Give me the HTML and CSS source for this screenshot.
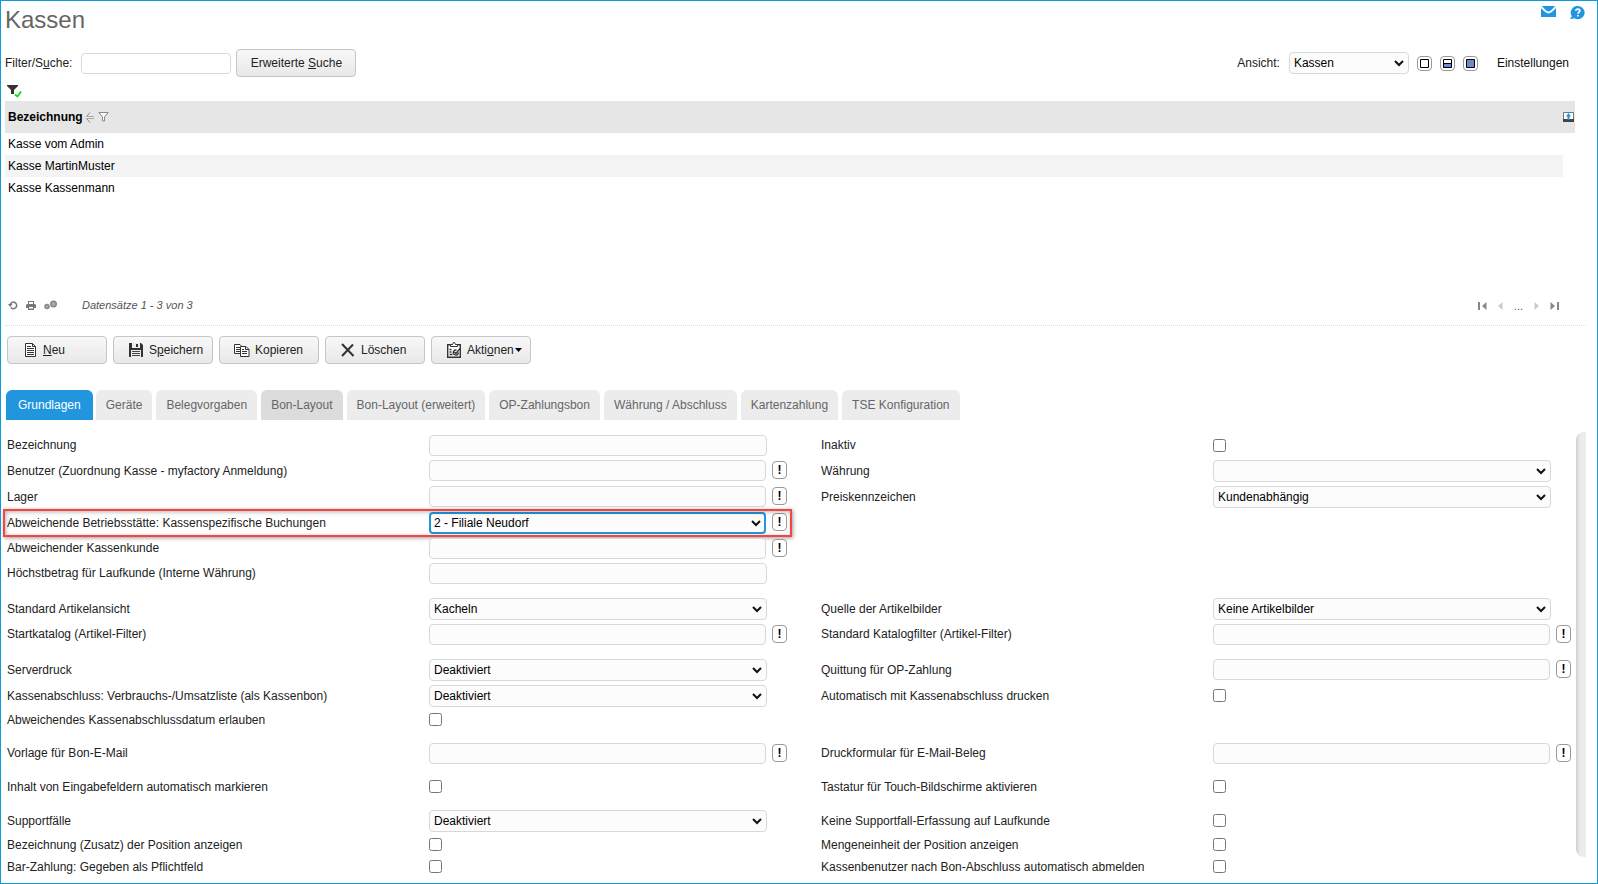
FILE: index.html
```html
<!DOCTYPE html>
<html lang="de">
<head>
<meta charset="utf-8">
<title>Kassen</title>
<link rel="stylesheet" href="styles.css">
</head>
<body>
<header class="page-head">
  <h1 class="page-title">Kassen</h1>
  <nav class="head-links">
    <a href="#mail" aria-label="Nachricht"><svg width="15" height="11" viewBox="0 0 15 11"><path fill="#2196de" d="M0 0h15v11H0z"/><path fill="none" stroke="#fff" stroke-width="2" d="M0 0.5Q5 6.5 7.500 6.500T15 .5"/></svg></a>
    <a href="#hilfe" aria-label="Hilfe"><svg width="15" height="14" viewBox="0 0 15 14"><path fill="#2196de" d="M8 0a6.600 6.600 0 1 1-3.500 12.200L0 13.300l1.800-3.100A6.600 6.600 0 0 1 8 0z"/><path fill="none" stroke="#fff" stroke-width="1.700" d="M5.800 4.800C5.900 2.600 9.900 2.600 9.900 4.700 9.900 6 8 6 8 7.800M8 8.900v1.700"/></svg></a>
  </nav>
</header>

<section class="toolbar">
  <label for="suche">Filter/S<u>u</u>che:</label>
  <input class="text search" id="suche" type="text">
  <button class="btn search-btn" type="button">Erweiterte <u>S</u>uche</button>
  <div class="view">
    <label for="ansicht">Ansicht:</label>
    <select class="select view-select" id="ansicht"><option>Kassen</option></select>
    <div class="view-modes">
      <button class="mini" type="button" aria-label="Nur Liste"><svg width="9" height="9" viewBox="0 0 9 9"><path fill="#fff" stroke="#000" d="M.5.5h8v8h-8z"/></svg></button>
      <button class="mini" type="button" aria-label="Geteilt"><svg width="9" height="9" viewBox="0 0 9 9"><path fill="#fff" d="M0 0h9v9H0z"/><path fill="#6f8cc8" d="M0 4h9v5H0z"/><path fill="none" stroke="#000" d="M.5.5h8v8h-8zM0 4.500h9"/></svg></button>
      <button class="mini" type="button" aria-label="Nur Details"><svg width="9" height="9" viewBox="0 0 9 9"><path fill="#6f8cc8" stroke="#000" d="M.5.5h8v8h-8z"/></svg></button>
    </div>
    <a class="settings" href="#einstellungen">Einstellungen</a>
  </div>
</section>

<div class="filter-state">
  <svg width="15" height="13" viewBox="0 0 15 13"><path fill="#333" d="M0 0h11v1L7 5v4H4V5L0 1z"/><path fill="none" stroke="#0be012" stroke-width="1.800" d="M8 9.500l2.500 2L14 6.500"/></svg>
</div>

<section class="list">
  <table class="grid">
    <thead>
      <tr>
        <th scope="col"><div class="col-head">Bezeichnung
          <svg width="9" height="11" viewBox="0 0 9 11"><path fill="none" stroke="#888" d="M.5 4.500 4 .5M.5 6.500 4 10.500"/><path stroke="#aaa" d="M1 4.500h7M1 6.500h7"/></svg>
          <svg width="11" height="10" viewBox="0 0 11 10"><path fill="#f8f8f8" stroke="#888" d="M.8.5h9.400L6.500 5v4h-2V5z"/></svg></div></th>
        <th class="tool-col"><svg width="11" height="10" viewBox="0 0 11 10"><path fill="#fff" stroke="#777" d="M.5.5h10v9H.5z"/><path fill="#444" d="M0 7h11v3H0z"/><path fill="#2196de" d="M5.500 1 8 4.500H6.500V8h-2V4.500H3z"/></svg></th>
      </tr>
    </thead>
    <tbody>
      <tr><td>Kasse vom Admin</td></tr>
      <tr class="alt"><td>Kasse MartinMuster</td></tr>
      <tr><td>Kasse Kassenmann</td></tr>
    </tbody>
  </table>
</section>

<footer class="list-foot">
  <div class="foot-tools">
    <button class="icon" type="button" aria-label="Aktualisieren"><svg width="10" height="10" viewBox="0 0 10 10"><path fill="none" stroke="#777" stroke-width="1.500" d="M2.200 4.500a3.300 3.300 0 1 1 .6 3"/><path fill="#777" d="M0 4h4.500L2.200 7z"/></svg></button>
    <button class="icon" type="button" aria-label="Drucken"><svg width="10" height="9" viewBox="0 0 10 9"><path fill="#777" d="M2 0h6v3h1l1 1v3H8v2H2V7H0V4l1-1h1z"/><path fill="#fff" d="M3 1h4v2H3zM3 6h4v1.500H3z"/></svg></button>
    <button class="icon" type="button" aria-label="Optionen"><svg width="13" height="10" viewBox="0 0 13 10"><circle cx="3" cy="6.500" r="2" fill="#aaa" stroke="#888" stroke-width="1.500"/><circle cx="9.500" cy="4" r="2.700" fill="#aaa" stroke="#888" stroke-width="1.600"/></svg></button>
  </div>
  <span class="count">Datensätze 1 - 3 von 3</span>
  <nav class="pager">
    <button class="icon" type="button" aria-label="Erste"><svg width="9" height="8" viewBox="0 0 9 8"><path fill="#888" d="M0 0h2v8H0zM8.500 0v8L4 4z"/></svg></button>
    <button class="icon" type="button" aria-label="Zurück"><svg width="5" height="8" viewBox="0 0 5 8"><path fill="#ccc" d="M4.500 0v8L0 4z"/></svg></button>
    <span>...</span>
    <button class="icon" type="button" aria-label="Weiter"><svg width="5" height="8" viewBox="0 0 5 8"><path fill="#ccc" d="M.5 0v8L5 4z"/></svg></button>
    <button class="icon" type="button" aria-label="Letzte"><svg width="9" height="8" viewBox="0 0 9 8"><path fill="#888" d="M7 0h2v8H7zM.5 0v8L5 4z"/></svg></button>
  </nav>
</footer>

<div class="actions">
  <button class="btn action" type="button"><svg width="16" height="16" viewBox="0 0 16 16"><path fill="#fff" stroke="#333" d="M3.500 1.500h7l3 3v10h-10z"/><path fill="none" stroke="#333" d="M10.500 1.500v3h3M5 4.500h4M5 6.500h7M5 8.500h7M5 10.500h7M5 12.500h7"/></svg><span><u>N</u>eu</span></button>
  <button class="btn action" type="button"><svg width="16" height="16" viewBox="0 0 16 16"><path fill="#333" d="M1 1h12l2 2v12H1z"/><path fill="#eee" d="M4 1h8v5H4zM3 8h10v7H3z"/><path fill="#333" d="M8 2h2v3H8z"/><path stroke="#444" d="M4 9.500h8M4 11.500h8M4 13.500h8"/></svg><span>S<u>p</u>eichern</span></button>
  <button class="btn action" type="button"><svg width="16" height="16" viewBox="0 0 16 16"><path fill="#fff" stroke="#333" d="M.5 2.500H6l2 2v7H.5z"/><path stroke="#333" d="M2 5.500h4M2 7.500h4M2 9.500h4"/><path fill="#fff" stroke="#333" d="M6.500 4.500H12l3 3v7H6.500z"/><path fill="none" stroke="#333" d="M11.500 4.500v3H15M8 7.500h2M8 9.500h5M8 11.500h5"/></svg><span>Kopieren</span></button>
  <button class="btn action" type="button"><svg width="16" height="16" viewBox="0 0 16 16"><path fill="none" stroke="#333" stroke-width="2" d="M2 2l11.500 12M13 2.500 2 14"/></svg><span>Löschen</span></button>
  <button class="btn action" type="button"><svg width="16" height="16" viewBox="0 0 16 16"><path fill="#fff" stroke="#333" stroke-width="1.400" d="M1.700 2.700h12.600v12.600H1.700z"/><path fill="#fff" stroke="#333" d="M4.500 4.500v-2h2l1-2h1l1 2h2v2z"/><path fill="none" stroke="#333" stroke-width="1.400" d="M3.500 7.500h2M3.500 10h2M3.500 12.500h3"/><path fill="none" stroke="#333" stroke-width="1.400" d="M12.500 10.500a2.600 2.600 0 1 1-2-2.500M8.500 10l1.500 1.500 4-5"/></svg><span>Akti<u>o</u>nen</span><svg class="caret" width="7" height="4" viewBox="0 0 7 4"><path d="M0 0h7L3.500 4z"/></svg></button>
</div>

<nav class="tabs">
  <a class="tab active" href="#grundlagen">Grundlagen</a>
  <a class="tab" href="#geraete">Geräte</a>
  <a class="tab" href="#belegvorgaben">Belegvorgaben</a>
  <a class="tab hover" href="#bon">Bon-Layout</a>
  <a class="tab" href="#bon2">Bon-Layout (erweitert)</a>
  <a class="tab" href="#op">OP-Zahlungsbon</a>
  <a class="tab" href="#waehrung">Währung / Abschluss</a>
  <a class="tab" href="#karten">Kartenzahlung</a>
  <a class="tab" href="#tse">TSE Konfiguration</a>
</nav>

<main class="detail">
  <form class="form">
    <div class="row">
      <label for="f1">Bezeichnung</label><div class="field"><input class="text" id="f1" type="text"></div>
      <label for="g1">Inaktiv</label><div class="field"><input class="check" id="g1" type="checkbox"></div>
    </div>
    <div class="row">
      <label for="f2">Benutzer (Zuordnung Kasse - myfactory Anmeldung)</label><div class="field lookup"><input class="text" id="f2" type="text"><button class="pick" type="button">!</button></div>
      <label for="g2">Währung</label><div class="field"><select class="select" id="g2"><option></option></select></div>
    </div>
    <div class="row">
      <label for="f3">Lager</label><div class="field lookup"><input class="text" id="f3" type="text"><button class="pick" type="button">!</button></div>
      <label for="g3">Preiskennzeichen</label><div class="field"><select class="select" id="g3"><option>Kundenabhängig</option></select></div>
    </div>
    <div class="row marked">
      <label for="f4">Abweichende Betriebsstätte: Kassenspezifische Buchungen</label><div class="field lookup"><select class="select focused" id="f4"><option>2 - Filiale Neudorf</option></select><button class="pick" type="button">!</button></div>
    </div>
    <div class="row">
      <label for="f5">Abweichender Kassenkunde</label><div class="field lookup"><input class="text" id="f5" type="text"><button class="pick" type="button">!</button></div>
    </div>
    <div class="row">
      <label for="f6">Höchstbetrag für Laufkunde (Interne Währung)</label><div class="field"><input class="text" id="f6" type="text"></div>
    </div>
    <div class="row group">
      <label for="f7">Standard Artikelansicht</label><div class="field"><select class="select" id="f7"><option>Kacheln</option></select></div>
      <label for="g7">Quelle der Artikelbilder</label><div class="field"><select class="select" id="g7"><option>Keine Artikelbilder</option></select></div>
    </div>
    <div class="row">
      <label for="f8">Startkatalog (Artikel-Filter)</label><div class="field lookup"><input class="text" id="f8" type="text"><button class="pick" type="button">!</button></div>
      <label for="g8">Standard Katalogfilter (Artikel-Filter)</label><div class="field lookup"><input class="text" id="g8" type="text"><button class="pick" type="button">!</button></div>
    </div>
    <div class="row group">
      <label for="f9">Serverdruck</label><div class="field"><select class="select" id="f9"><option>Deaktiviert</option></select></div>
      <label for="g9">Quittung für OP-Zahlung</label><div class="field lookup"><input class="text" id="g9" type="text"><button class="pick" type="button">!</button></div>
    </div>
    <div class="row">
      <label for="f10">Kassenabschluss: Verbrauchs-/Umsatzliste (als Kassenbon)</label><div class="field"><select class="select" id="f10"><option>Deaktiviert</option></select></div>
      <label for="g10">Automatisch mit Kassenabschluss drucken</label><div class="field"><input class="check" id="g10" type="checkbox"></div>
    </div>
    <div class="row">
      <label for="f11">Abweichendes Kassenabschlussdatum erlauben</label><div class="field"><input class="check" id="f11" type="checkbox"></div>
    </div>
    <div class="row group">
      <label for="f12">Vorlage für Bon-E-Mail</label><div class="field lookup"><input class="text" id="f12" type="text"><button class="pick" type="button">!</button></div>
      <label for="g12">Druckformular für E-Mail-Beleg</label><div class="field lookup"><input class="text" id="g12" type="text"><button class="pick" type="button">!</button></div>
    </div>
    <div class="row group">
      <label for="f13">Inhalt von Eingabefeldern automatisch markieren</label><div class="field"><input class="check" id="f13" type="checkbox"></div>
      <label for="g13">Tastatur für Touch-Bildschirme aktivieren</label><div class="field"><input class="check" id="g13" type="checkbox"></div>
    </div>
    <div class="row group">
      <label for="f14">Supportfälle</label><div class="field"><select class="select" id="f14"><option>Deaktiviert</option></select></div>
      <label for="g14">Keine Supportfall-Erfassung auf Laufkunde</label><div class="field"><input class="check" id="g14" type="checkbox"></div>
    </div>
    <div class="row">
      <label for="f15">Bezeichnung (Zusatz) der Position anzeigen</label><div class="field"><input class="check" id="f15" type="checkbox"></div>
      <label for="g15">Mengeneinheit der Position anzeigen</label><div class="field"><input class="check" id="g15" type="checkbox"></div>
    </div>
    <div class="row">
      <label for="f16">Bar-Zahlung: Gegeben als Pflichtfeld</label><div class="field"><input class="check" id="f16" type="checkbox"></div>
      <label for="g16">Kassenbenutzer nach Bon-Abschluss automatisch abmelden</label><div class="field"><input class="check" id="g16" type="checkbox"></div>
    </div>
  </form>
  <div class="scroll-track"></div>
</main>
</body>
</html>
```
FILE: styles.css
```css
* {
  box-sizing: border-box;
}

body {
  margin: 0;
  min-height: 100vh;
  border: 1px solid #0a9be0;
  padding: 5px 0 5px 4px;
  background: #fff;
  color: #222;
  font: 12px/16px Arial, "Liberation Sans", sans-serif;
}

input,
select,
button {
  margin: 0;
  font: inherit;
  color: #000;
}

a {
  color: inherit;
  text-decoration: none;
}

svg {
  display: block;
  flex: none;
}

.page-head {
  display: flex;
  justify-content: space-between;
  align-items: flex-start;
  padding-right: 12px;
}

.page-title {
  margin: 0;
  color: #666;
  font-size: 24px;
  font-weight: 400;
  line-height: 28px;
}

.head-links {
  display: flex;
  align-items: flex-start;
  gap: 14px;
}

.toolbar {
  display: flex;
  align-items: center;
  margin-top: 15px;
  padding-right: 28px;
}

.text {
  width: 100%;
  min-width: 0;
  height: 21px;
  border: 1px solid #d8d8d8;
  border-radius: 4px;
  padding: 0 4px;
  background: #fcfcfc;
}

.select {
  appearance: none;
  width: 100%;
  min-width: 0;
  height: 22px;
  border: 1px solid #d8d8d8;
  border-radius: 4px;
  padding: 0 20px 0 4px;
  background: #fcfcfc url("data:image/svg+xml,%3Csvg xmlns='http://www.w3.org/2000/svg' width='10' height='7'%3E%3Cpath d='M1 1l4 4 4-4' fill='none' stroke='%23111' stroke-width='2'/%3E%3C/svg%3E") no-repeat right 4px center;
}

.search {
  width: 150px;
  margin: 0 5px 0 9px;
  background: #fff;
}

.btn {
  height: 28px;
  border: 1px solid #c6c6c6;
  border-radius: 4px;
  padding: 0;
  background: linear-gradient(#f8f8f8, #e8e8e8);
  color: #222;
}

.search-btn {
  width: 120px;
}

.view {
  display: flex;
  align-items: center;
  margin-left: auto;
}

.view-select {
  width: 120px;
  margin: 0 8px 0 9px;
}

.view-modes {
  display: flex;
  gap: 8px;
}

.mini {
  display: grid;
  place-items: center;
  width: 15px;
  height: 15px;
  border: 1px solid #999;
  border-radius: 4px;
  padding: 0;
  background: #fff;
}

.settings {
  margin-left: 19px;
  color: #111;
}

.filter-state {
  padding: 8px 0 3px 2px;
}

.list {
  min-height: 194px;
  padding-right: 22px;
}

.grid {
  width: 100%;
  border-collapse: collapse;
  color: #000;
}

.grid th {
  height: 32px;
  padding: 0 0 0 3px;
  background: #e6e6e6;
  text-align: left;
}

.grid .tool-col {
  width: 12px;
  padding: 0;
}

.grid td {
  height: 22px;
  padding: 0 3px;
}

.alt td {
  background: #f4f4f4;
}

.col-head {
  display: flex;
  align-items: center;
  gap: 3px;
}

.list-foot {
  display: flex;
  align-items: center;
  height: 31px;
  margin-right: 11px;
  padding: 0 27px 10px 3px;
  border-bottom: 1px dotted #ddd;
  color: #555;
  font-size: 11px;
}

.foot-tools {
  display: flex;
  align-items: center;
  gap: 8px;
  width: 74px;
}

.icon {
  border: 0;
  padding: 0;
  background: none;
}

.count {
  font-style: italic;
}

.pager {
  display: flex;
  align-items: center;
  gap: 11px;
  margin-left: auto;
  padding-top: 2px;
}

.actions {
  display: flex;
  gap: 6px;
  margin-top: 10px;
  padding-left: 2px;
}

.action {
  display: flex;
  align-items: center;
  gap: 5px;
  width: 100px;
  padding-left: 14px;
}

.caret {
  margin-left: -4px;
}

.tabs {
  display: flex;
  gap: 4px;
  margin-top: 26px;
  padding-left: 1px;
}

.tab {
  border-radius: 6px 6px 0 0;
  padding: 7px 10px;
  background: #ececec;
  color: #666;
}

.tab.hover {
  background: #dcdcdc;
}

.tab.active {
  margin-right: -1px;
  padding: 7px 12px;
  background: #2196de;
  color: #fff;
}

.detail {
  display: flex;
  margin-top: 12px;
  padding: 0 10px 0 2px;
}

.form {
  flex: 1;
  padding-top: 1px;
}

.row {
  display: grid;
  grid-template-columns: 422fr 392fr 392fr 363fr;
  align-items: center;
  min-height: 22px;
  position: relative;
}

.row label {
  padding-bottom: 1px;
}

.group {
  margin-top: 10px;
}

.field {
  display: flex;
  align-items: flex-start;
  align-self: start;
  padding: 2px 25px 2px 0;
}

.field:nth-child(2) {
  padding-right: 54px;
}

.lookup {
  gap: 6px;
  padding-right: 5px;
}

.lookup:nth-child(2) {
  padding-right: 34px;
}

.field:has(.check) {
  align-self: center;
  padding-top: 0;
  padding-bottom: 1px;
}

.check {
  width: 13px;
  height: 13px;
}

.pick {
  flex: none;
  width: 15px;
  height: 18px;
  margin-top: 1px;
  border: 1px solid #999;
  border-radius: 4px;
  padding: 0;
  background: #fff;
  font-weight: 700;
  line-height: 14px;
}

.focused {
  border: 2px solid #2196de;
  padding-left: 3px;
  background-position: right 3px center;
}

.marked::after {
  content: "";
  position: absolute;
  inset: -1px 50% -1px -4px;
  border: 2px solid #f44444;
  box-shadow: 1px 1px 4px rgba(0, 0, 0, 0.4), inset 1px 1px 4px rgba(0, 0, 0, 0.3);
  pointer-events: none;
}

.scroll-track {
  width: 10px;
  margin: 0 1px 21px 0;
  border-radius: 8px 0 0 8px;
  background: linear-gradient(90deg, #d0d0d0, #ececec 40%, #ececec);
}
```
